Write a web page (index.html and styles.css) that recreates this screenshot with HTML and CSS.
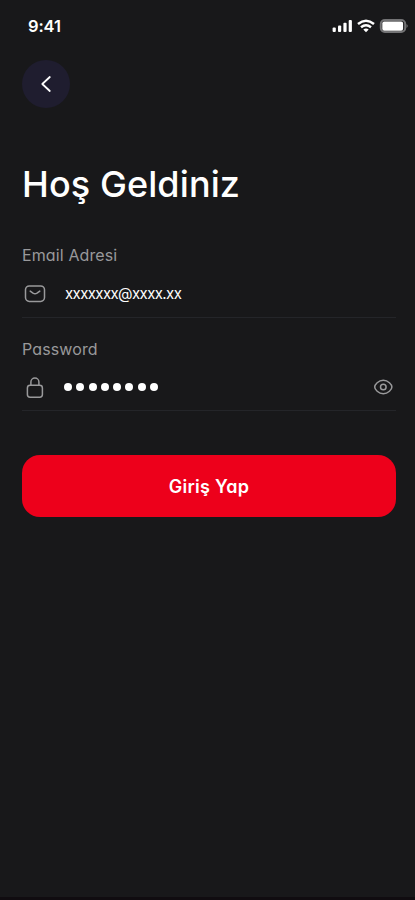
FILE: index.html
```html
<!DOCTYPE html>
<html lang="tr">
<head>
<meta charset="utf-8">
<meta name="viewport" content="width=device-width, initial-scale=1">
<title>Giriş Yap</title>
<link rel="stylesheet" href="styles.css">
</head>
<body>
<main class="screen">
  <header class="status">
    <span class="time">9:41</span>
    <svg class="signals" width="78" height="16" viewBox="0 0 78 16" fill="#fff">
      <rect x="2.6" y="9.5" width="3.2" height="4.5" rx="1"/>
      <rect x="8" y="7.5" width="3.2" height="6.5" rx="1"/>
      <rect x="13.4" y="4.8" width="3.2" height="9.2" rx="1"/>
      <rect x="18.7" y="2" width="3.2" height="12" rx="1"/>
      <g fill="none" stroke="#fff" stroke-width="2.5"><path d="M28 6Q36 -.6 44 6"/><path d="M31 9.3Q36 5.3 41 9.3"/></g>
      <path d="M33.3 11.4Q36 9.4 38.7 11.4L36 14.2Z"/>
      <rect x="50.8" y="2" width="24.4" height="12" rx="4" fill="none" stroke="#737375" stroke-width="2"/>
      <rect x="52.3" y="3.5" width="20.8" height="9.2" rx="2"/>
      <path d="M76.5 6Q79 8 76.5 10Z" fill="#737375"/>
    </svg>
  </header>
  <button class="back" aria-label="Geri">
    <svg width="48" height="48" viewBox="0 0 48 48" fill="none" stroke="#fff" stroke-width="1.8" stroke-linecap="round" stroke-linejoin="round"><path d="M27.8 17L20.3 24L27.8 31"/></svg>
  </button>
  <h1>Hoş Geldiniz</h1>
  <section class="field">
    <div class="label email-label">Email Adresi</div>
    <div class="row">
      <svg width="26" height="26" viewBox="0 0 26 26" fill="none" stroke="#99999b" stroke-width="1.5" stroke-linecap="round" stroke-linejoin="round"><rect x="3.5" y="5" width="19" height="15.4" rx="3.8"/><path d="M8.2 10.1L11 12.2Q13 13.5 15 12.2L17.8 10.1"/></svg>
      <span class="email">xxxxxxx@xxxx.xx</span>
    </div>
  </section>
  <section class="field">
    <div class="label pass-label">Password</div>
    <div class="row">
      <svg width="26" height="26" viewBox="0 0 26 26" fill="none" stroke="#99999b" stroke-width="1.5" stroke-linecap="round" stroke-linejoin="round"><rect x="5.4" y="11.2" width="15" height="12" rx="2.7"/><path d="M8.9 10.9V8a4 4 0 0 1 8 0v2.9"/></svg>
      <span class="dots"><i></i><i></i><i></i><i></i><i></i><i></i><i></i><i></i></span>
      <svg class="eye" width="26" height="26" viewBox="0 0 26 26" fill="none" stroke="#99999b" stroke-width="1.5"><path d="M4.7 13C4.7 10.6 8.4 6.3 13.3 6.3S21.9 10.6 21.9 13S18.2 19.7 13.3 19.7S4.7 15.4 4.7 13Z"/><circle cx="13.3" cy="13" r="2.8"/></svg>
    </div>
  </section>
  <button class="submit"><span>Giriş Yap</span></button>
</main>
</body>
</html>
```
FILE: styles.css
```css
* { box-sizing: border-box; }
body {
  margin: 0;
  background: #18181a;
  color: #fff;
  font-family: Inter, "Open Sans", sans-serif;
  font-feature-settings: "cv11" 1;
}
.screen {
  height: 900px;
  padding: 0 19px 0 22px;
  border-bottom: 3px solid #100c10;
  overflow: hidden;
}
.status {
  display: flex;
  justify-content: space-between;
  align-items: center;
  height: 60px;
  padding: 0 0 8px 6px;
  margin-right: -12px;
}
.time { font-size: 16.5px; font-weight: 600; letter-spacing: -.1px; }
.signals { display: block; }
button { border: 0; padding: 0; color: inherit; font: inherit; font-feature-settings: inherit; }
.back { display: block; width: 48px; height: 48px; border-radius: 50%; background: #1f1d2f; }
.back svg { display: block; }
h1 {
  margin: 53px 0 0;
  height: 47px;
  line-height: 47px;
  font-size: 36px;
  font-weight: 540;
  letter-spacing: .1px;
  white-space: nowrap;
}
.field { height: 93px; border-bottom: 1px solid #242529; }
h1 + .field { height: 110px; }
.label { color: #99999b; font-size: 16px; line-height: 24px; letter-spacing: .12px; }
.email-label { padding-top: 35px; }
.pass-label { padding-top: 19px; }
.row { display: flex; align-items: center; height: 26px; margin-top: 14px; }
.pass-label + .row { margin-top: 13px; }
.email { margin-left: 17px; font-size: 15px; line-height: 26px; letter-spacing: -.6px; }
.dots { display: flex; gap: 4.3px; margin-left: 16px; }
.dots i { width: 8px; height: 8px; border-radius: 50%; background: #fff; }
.eye { margin-left: auto; }
.submit {
  display: block;
  width: 374px;
  height: 62.5px;
  margin-top: 43.5px;
  padding-top: 2px;
  border-radius: 18px;
  background: #ed001b;
  font-size: 18px;
  font-weight: 600;
  letter-spacing: .25px;
}
```
